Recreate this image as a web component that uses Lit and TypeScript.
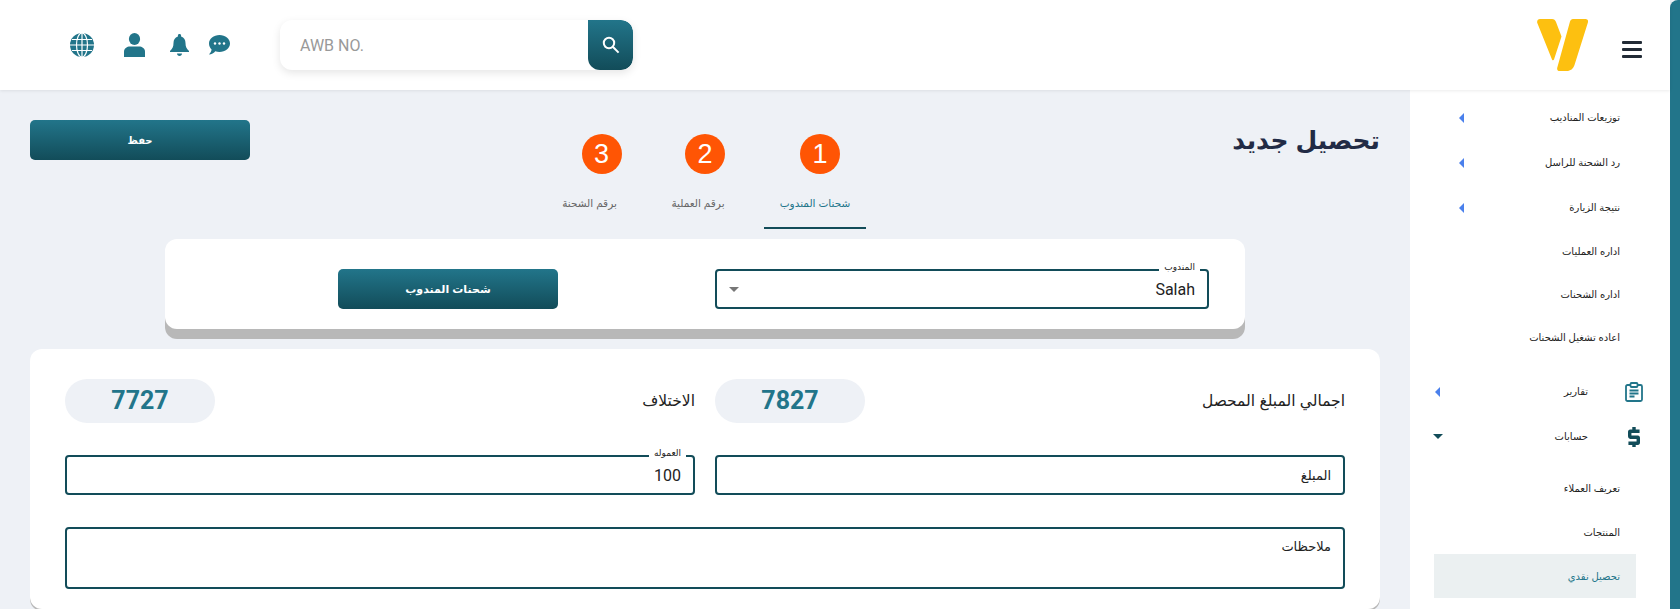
import { LitElement, css, html } from "lit";
import { customElement } from "lit/decorators.js";

const menu = [
  { label: "توزيعات المناديب", arrow: true },
  { label: "رد الشحنة للراسل", arrow: true },
  { label: "نتيجة الزيارة", arrow: true },
  { label: "اداره العمليات" },
  { label: "اداره الشحنات" },
  { label: "اعاده تشغيل الشحنات" },
];

const subMenu = [
  { label: "تعريف العملاء" },
  { label: "المنتجات" },
  { label: "تحصيل نقدي", active: true },
];

// shift: the number circle does not sit on the centre of its tab
const steps = [
  { n: 1, label: "شحنات المندوب", active: true, width: 102, shift: 5 },
  { n: 2, label: "برقم العملية", width: 84, shift: 7 },
  { n: 3, label: "برقم الشحنة", width: 85, shift: 12 },
];

const globeIcon = html`<svg width="24" height="24" viewBox="0 0 24 24" fill="#22758a"><circle cx="12" cy="12" r="12"/><g fill="none" stroke="#fff" stroke-width="1.2"><ellipse cx="12" cy="12" rx="5.5" ry="12"/><path d="M12 0v24M0 12h24M2 6.5h20M2 17.5h20"/></g></svg>`;
const userIcon = html`<svg width="21" height="24" viewBox="0 0 21 24" fill="#22758a"><ellipse cx="10.5" cy="6" rx="5.6" ry="6"/><path d="M0 24v-5.5C0 15.5 3 13.5 6 13.5h9c3 0 6 2 6 5V24z"/></svg>`;
const bellIcon = html`<svg width="19" height="22" viewBox="0 0 19 22" fill="#22758a"><path d="M9.5 0c1 0 1.6.7 1.6 1.7v.8c3 .8 4.4 3.4 4.4 6.5 0 3.5 1 5.5 3.5 8v1H0v-1c2.5-2.5 3.5-4.5 3.5-8 0-3.1 1.4-5.7 4.4-6.5v-.8C7.9.7 8.5 0 9.5 0z"/><path d="M7 19.5h5c0 1.5-1.1 2.5-2.5 2.5S7 21 7 19.5z"/></svg>`;
const chatIcon = html`<svg width="21" height="20" viewBox="0 0 21 20" fill="#22758a"><path d="M10.5 0C16.3 0 21 3.7 21 8.5S16.3 17 10.5 17c-1.5 0-2.9-.2-4.2-.7C5 17.8 2.5 19.5 0 19.5c1.3-1.3 2.3-3 2.6-4.9C1 13 0 10.9 0 8.5 0 3.7 4.7 0 10.5 0z"/><g fill="#fff"><circle cx="6" cy="8.5" r="1.2"/><circle cx="10.5" cy="8.5" r="1.2"/><circle cx="15" cy="8.5" r="1.2"/></g></svg>`;
const searchIcon = html`<svg width="18" height="18" viewBox="0 0 18 18" fill="none" stroke="#fff" stroke-width="2"><circle cx="7" cy="7" r="5.2"/><path d="M11 11l5.6 5.6"/></svg>`;
const logo = html`<svg width="51" height="52" viewBox="0 0 51 52" fill="#fdc010"><path d="M3 0h12c2 0 3.3 1 4 3l5.5 14.500-7.500 23c-.4 1-1.400 1-1.900.2L.3 4C-.4 2 1 0 3 0z"/><path d="M36 0h12.500c2 0 3 1.600 2.400 3.400L37.500 46c-1.200 3.800-4 6-7.800 6h-7c-2 0-3-1.500-2.400-3.400L33 2.500C33.500 1 34.500 0 36 0z"/></svg>`;
const clipIcon = html`<svg width="18" height="20" viewBox="0 0 18 20" fill="none" stroke="#22758a" stroke-width="1.8"><rect x="1" y="3" width="16" height="16" rx="1.5"/><rect x="5.5" y="1" width="7" height="4" rx="1" fill="#fff"/><path d="M4.5 8.5h9M4.5 11.5h9M4.5 14.5h5"/></svg>`;
const dollarIcon = html`<svg width="12" height="20" viewBox="0 0 14 20" preserveAspectRatio="none" fill="#124c59"><path d="M5 0h4v2.500h4.500V6H4v2.500h7.500c1.500 0 2.500 1 2.500 2.500v4.500c0 1.500-1 2.500-2.500 2.500H9v2H5v-2H.5v-3.500H10v-2.500H2.500C1 11.500 0 10.500 0 9V5c0-1.500 1-2.500 2.500-2.500H5z"/></svg>`;

@customElement("app-root")
export class AppRoot extends LitElement {
  static styles = css`
    :host {
      display: block;
      height: 609px;
      overflow: hidden;
      background: #eef1f6;
      font-family: "Liberation Sans", "DejaVu Sans", sans-serif;
      color: #222;
    }
    .page {
      display: flex;
      flex-direction: column;
      height: 609px;
      margin-right: 10px;
      position: relative;
    }
    .strip {
      position: absolute;
      top: 0;
      bottom: 0;
      right: -10px;
      width: 10px;
      background: #22758a;
      border-top-left-radius: 8px;
    }
    header {
      flex: none;
      height: 90px;
      background: #fff;
      box-shadow: 0 1px 3px rgba(0, 0, 0, 0.08);
      display: flex;
      align-items: center;
      position: relative;
      z-index: 1;
    }
    .icons {
      display: flex;
      align-items: center;
      margin-left: 70px;
      width: 210px;
    }
    .icons svg {
      display: block;
      flex: none;
    }
    .icons .user {
      margin-left: 30px;
    }
    .icons .bell {
      margin-left: 25px;
    }
    .icons .chat {
      margin-left: 20px;
    }
    .search {
      width: 353px;
      height: 50px;
      border-radius: 12px;
      background: #fff;
      box-shadow: 0 3px 8px rgba(0, 0, 0, 0.1);
      display: flex;
      align-items: center;
      overflow: hidden;
    }
    .search span {
      flex: 1;
      padding-left: 20px;
      font: 16px Roboto, sans-serif;
      color: #999;
    }
    .search button {
      width: 45px;
      height: 50px;
      border: 0;
      padding: 0;
      display: flex;
      align-items: center;
      justify-content: center;
      background: linear-gradient(#22758a, #124c59);
      border-radius: 0 12px 12px 12px;
    }
    .brand {
      margin-left: auto;
      display: flex;
      align-items: center;
      gap: 34px;
      padding-right: 28px;
    }
    .burger {
      display: flex;
      flex-direction: column;
      gap: 4px;
      margin-top: 8px;
    }
    .burger i {
      display: block;
      width: 20px;
      height: 3px;
      background: #222b36;
      border-radius: 1px;
    }
    .body {
      flex: 1;
      display: flex;
      min-height: 0;
    }
    main {
      flex: 1;
      padding: 30px 30px 0;
      min-width: 0;
      display: flex;
      flex-direction: column;
    }
    aside {
      flex: none;
      width: 260px;
      background: #fff;
      direction: rtl;
      font-size: 10px;
      color: #222;
      white-space: nowrap;
    }
    .menu {
      padding-top: 5px;
    }
    .item {
      height: 43px;
      display: flex;
      align-items: center;
      justify-content: space-between;
      padding: 0 50px 0 0;
    }
    .item.has-arrow {
      height: 45px;
      padding-left: 49px;
    }
    .arrow-left {
      width: 0;
      height: 0;
      border-top: 5px solid transparent;
      border-bottom: 5px solid transparent;
      border-right: 5px solid #4a80ec;
    }
    .arrow-down {
      width: 0;
      height: 0;
      border-left: 5px solid transparent;
      border-right: 5px solid transparent;
      border-top: 5px solid #124c59;
    }
    .groups {
      margin-top: 10px;
    }
    .group {
      height: 45px;
      display: flex;
      align-items: center;
      padding: 0 27px 0 25px;
    }
    .group.open {
      padding-left: 23px;
    }
    .group .ico {
      flex: none;
      width: 18px;
      margin-left: 37px;
      display: flex;
      justify-content: center;
    }
    .group svg {
      display: block;
    }
    .group .arrow-left,
    .group .arrow-down {
      margin-right: auto;
    }
    .subs {
      padding-top: 7px;
    }
    .subs .item {
      height: 44px;
    }
    .subs .item.sub-active {
      width: 202px;
      margin-right: 34px;
      padding-right: 16px;
      box-sizing: border-box;
      background: #ebf0f1;
      color: #22758a;
    }
    .top {
      display: flex;
      align-items: flex-start;
      height: 119px;
      flex: none;
    }
    .save,
    .action {
      width: 220px;
      height: 40px;
      flex: none;
      border: 0;
      border-radius: 5px;
      background: linear-gradient(#22758a, #124c59);
      color: #fff;
      font: bold 11px "Liberation Sans", "DejaVu Sans", sans-serif;
      direction: rtl;
    }
    .save {
      font-size: 10px;
    }
    .tabs {
      display: flex;
      margin-left: 297px;
      gap: 24px;
      direction: rtl;
    }
    .tab {
      display: flex;
      flex-direction: column;
      align-items: center;
      height: 109px;
      box-sizing: border-box;
      font-size: 10.5px;
      color: #666;
      white-space: nowrap;
    }
    .tab.active {
      color: #22758a;
      border-bottom: 2px solid #124c59;
    }
    .num {
      width: 40px;
      height: 40px;
      margin-top: 14px;
      margin-bottom: 23px;
      border-radius: 50%;
      background: #ff5504;
      color: #fff;
      font-size: 27px;
      line-height: 40px;
      text-align: center;
    }
    h1 {
      margin: 0 0 0 auto;
      padding-top: 2px;
      font-size: 25px;
      line-height: 36px;
      font-weight: 700;
      color: #222b45;
    }
    .card {
      background: #fff;
      border-radius: 12px;
    }
    .picker {
      margin: 0 135px;
      height: 90px;
      box-sizing: border-box;
      box-shadow: 0 10px 0 #b8b8b8;
      display: flex;
      align-items: flex-start;
      justify-content: space-between;
      padding: 30px 36px 0 173px;
      flex: none;
    }
    .field {
      position: relative;
      box-sizing: border-box;
      height: 40px;
      border: 2px solid #124c59;
      border-radius: 4px;
      background: #fff;
      direction: rtl;
      display: flex;
      align-items: center;
      padding: 0 12px;
      font: 16px Roboto, "DejaVu Sans", sans-serif;
      color: #222;
    }
    .field .hint {
      font-size: 13px;
    }
    .field .tag {
      position: absolute;
      top: -10px;
      right: 7px;
      padding: 0 5px;
      background: #fff;
      font: 9px/12px "Liberation Sans", "DejaVu Sans", sans-serif;
    }
    .select {
      width: 494px;
    }
    .caret {
      margin-right: auto;
      width: 0;
      height: 0;
      border-left: 5px solid transparent;
      border-right: 5px solid transparent;
      border-top: 5px solid #777;
    }
    .form {
      flex: 1;
      margin-top: 20px;
      padding: 30px 35px 0;
      box-shadow: 0 2px 0 #b8b8b8;
      display: grid;
      grid-template-columns: 1fr 1fr;
      column-gap: 20px;
      grid-auto-rows: min-content;
      direction: rtl;
    }
    .stat {
      display: flex;
      align-items: center;
      justify-content: space-between;
      height: 44px;
      margin-bottom: 32px;
      font-size: 15.5px;
      color: #222;
    }
    .pill {
      width: 150px;
      height: 44px;
      border-radius: 22px;
      background: #eef1f6;
      color: #22758a;
      font: bold 25px/44px Roboto, sans-serif;
      text-align: center;
    }
    .field.wide {
      grid-column: 1 / -1;
      height: 62px;
      margin-top: 32px;
      align-items: flex-start;
      padding-top: 10px;
    }
  `;

  render() {
    return html`<div class="page">
      <header>
        <div class="icons">
          ${globeIcon}
          <span class="user">${userIcon}</span>
          <span class="bell">${bellIcon}</span>
          <span class="chat">${chatIcon}</span>
        </div>
        <div class="search">
          <span>AWB NO.</span>
          <button>${searchIcon}</button>
        </div>
        <div class="brand">
          ${logo}
          <div class="burger"><i></i><i></i><i></i></div>
        </div>
      </header>
      <div class="body">
        <main>
          <div class="top">
            <button class="save">حفظ</button>
            <div class="tabs">
              ${steps.map(
                (s) => html`<div class="tab ${s.active ? "active" : ""}" style="width:${s.width}px">
                  <div class="num" style="transform:translateX(${s.shift}px)">${s.n}</div>
                  <div>${s.label}</div>
                </div>`
              )}
            </div>
            <h1 dir="rtl">تحصيل جديد</h1>
          </div>
          <div class="card picker">
            <button class="action">شحنات المندوب</button>
            <div class="field select">
              <span class="tag">المندوب</span>
              Salah
              <span class="caret"></span>
            </div>
          </div>
          <div class="card form">
            <div class="stat"><span>اجمالي المبلغ المحصل</span><span class="pill">7827</span></div>
            <div class="stat"><span>الاختلاف</span><span class="pill">7727</span></div>
            <div class="field"><span class="hint">المبلغ</span></div>
            <div class="field"><span class="tag">العموله</span>100</div>
            <div class="field wide"><span class="hint">ملاحظات</span></div>
          </div>
        </main>
        <aside>
          <div class="menu">
            ${menu.map(
              (m) => html`<div class="item ${m.arrow ? "has-arrow" : ""}">
                <span>${m.label}</span>
                ${m.arrow ? html`<span class="arrow-left"></span>` : ""}
              </div>`
            )}
          </div>
          <div class="groups">
            <div class="group"><span class="ico">${clipIcon}</span><span>تقارير</span><span class="arrow-left"></span></div>
            <div class="group open"><span class="ico">${dollarIcon}</span><span>حسابات</span><span class="arrow-down"></span></div>
          </div>
          <div class="subs">
            ${subMenu.map(
              (m) => html`<div class="item ${m.active ? "sub-active" : ""}"><span>${m.label}</span></div>`
            )}
          </div>
        </aside>
      </div>
      <div class="strip"></div>
    </div>`;
  }
}
